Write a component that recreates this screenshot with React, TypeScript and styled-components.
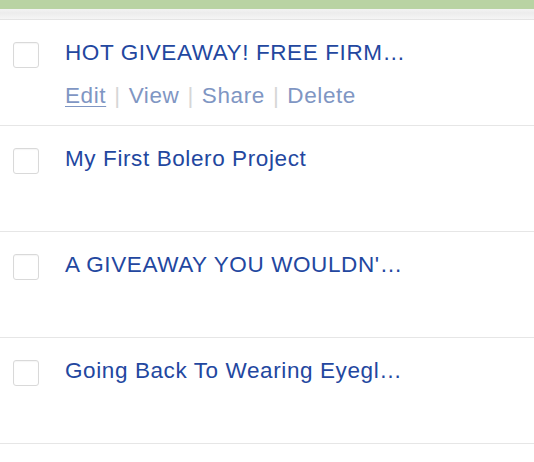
import * as React from "react";
import styled, { createGlobalStyle } from "styled-components";

const GlobalStyle = createGlobalStyle`
  html, body {
    margin: 0;
    padding: 0;
    background: #ffffff;
    font-family: "Liberation Sans", Arial, sans-serif;
  }
`;

const Page = styled.div`
  width: 534px;
  height: 462px;
  overflow: hidden;
  background: #ffffff;
`;

const TopBar = styled.div`
  height: 9px;
  background: #b9d3a3;
`;

const ShadowBand = styled.div`
  height: 10px;
  background: linear-gradient(#f3f3f3, #ececec 40%, #f5f5f5);
  border-bottom: 1px solid #e4e4e4;
`;

const List = styled.ul`
  list-style: none;
  margin: 0;
  padding: 0;
`;

const Row = styled.li`
  display: flex;
  align-items: flex-start;
  gap: 26px;
  height: 106px;
  box-sizing: border-box;
  padding: 20px 0 0 13px;
  border-bottom: 1px solid #e6e6e6;
`;

const Check = styled.span`
  flex: none;
  width: 24px;
  height: 24px;
  margin-top: 2px;
  border: 1px solid #d9d9d9;
  border-radius: 3px;
  background: #fff;
  box-shadow: inset 0 1px 1px rgba(0, 0, 0, 0.04);
`;

const Body = styled.div`
  display: flex;
  flex-direction: column;
  gap: 17px;
`;

const Title = styled.a`
  font-size: 22.5px;
  line-height: 26px;
  letter-spacing: 0.6px;
  color: #23479f;
  text-decoration: none;
`;

const Actions = styled.div`
  display: flex;
  align-items: center;
  font-size: 22.5px;
  line-height: 26px;
  letter-spacing: 0.6px;
  color: #7f96c3;
`;

const Action = styled.a<{ $active?: boolean }>`
  color: inherit;
  text-decoration: ${({ $active }) => ($active ? "underline" : "none")};
  text-underline-offset: 3px;
  text-decoration-thickness: 1px;
`;

const Sep = styled.span`
  color: #d6d6d6;
  margin: 0 8px;
`;

const posts = [
  { title: "HOT GIVEAWAY! FREE FIRM…", hover: true },
  { title: "My First Bolero Project" },
  { title: "A GIVEAWAY YOU WOULDN'…" },
  { title: "Going Back To Wearing Eyegl…" },
];

const actions = ["Edit", "View", "Share", "Delete"];

export default function App() {
  return (
    <Page>
      <GlobalStyle />
      <TopBar />
      <ShadowBand />
      <List>
        {posts.map((p) => (
          <Row key={p.title}>
            <Check />
            <Body>
              <Title href="#">{p.title}</Title>
              {p.hover && (
                <Actions>
                  {actions.map((a, i) => (
                    <React.Fragment key={a}>
                      {i > 0 && <Sep>|</Sep>}
                      <Action href="#" $active={i === 0}>
                        {a}
                      </Action>
                    </React.Fragment>
                  ))}
                </Actions>
              )}
            </Body>
          </Row>
        ))}
      </List>
    </Page>
  );
}
